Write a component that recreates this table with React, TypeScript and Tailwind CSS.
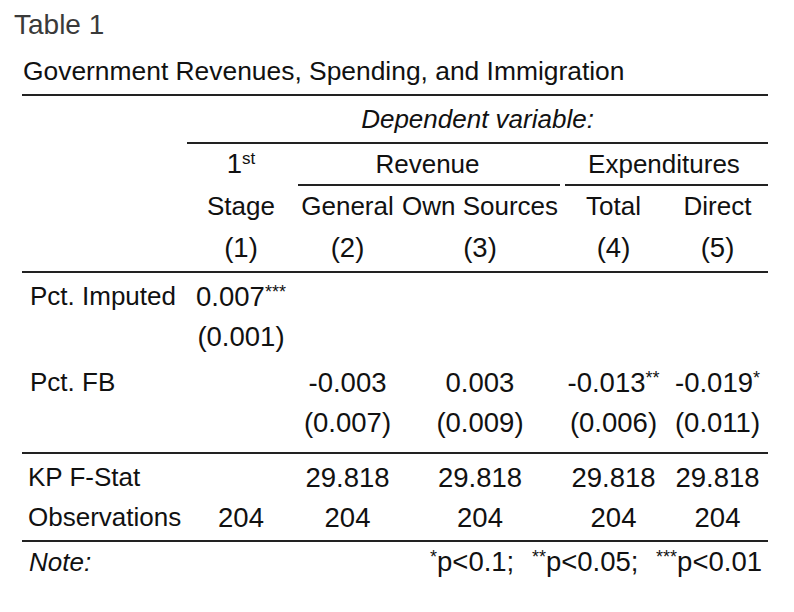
import React from "react";

const cols = "grid grid-cols-[165px_108px_105px_160px_107px_101px]";

function Line({ className = "" }: { className?: string }) {
  return <div className={`h-[2px] bg-[#222] ${className}`} />;
}

function Sup({ children }: { children: React.ReactNode }) {
  return <span className="text-[18px] align-[8px] leading-none">{children}</span>;
}

function N({ children }: { children?: React.ReactNode }) {
  return <div className="text-[27.5px]">{children}</div>;
}

export default function App() {
  return (
    <div
      className="w-[794px] h-[612px] bg-white text-[#111] text-[26px] overflow-hidden"
      style={{ fontFamily: '"Liberation Sans", Arial, sans-serif' }}
    >
      <div className="h-[50px] flex items-center pl-[14px] text-[#3a3a3a] text-[28px]">Table 1</div>
      <div className="ml-[22px] w-[746px]">
        <div className="h-[44px] flex items-center pl-[1px] text-[26.4px]">
          Government Revenues, Spending, and Immigration
        </div>
        <Line />
        <div className={`${cols} h-[46px] items-center`}>
          <div />
          <div className="col-span-5 text-center italic">Dependent variable:</div>
        </div>
        <div className={cols}>
          <div />
          <Line className="col-span-5" />
        </div>
        {/* Row A */}
        <div className={`${cols} h-[42px]`}>
          <div />
          <div className="h-[40px] flex items-center justify-center">
            <span className="text-[27.5px]">
              1<span className="text-[17px] align-[9px] leading-none">st</span>
            </span>
          </div>
          <div className="col-span-2 flex flex-col">
            <div className="h-[40px] flex items-center justify-center">Revenue</div>
            <Line className="ml-[3px]" />
          </div>
          <div className="col-span-2 flex flex-col">
            <div className="h-[40px] flex items-center justify-center">Expenditures</div>
            <Line className="ml-[5px]" />
          </div>
        </div>
        {/* Row B */}
        <div className={`${cols} h-[41px] items-center text-center`}>
          <div />
          <div>Stage</div>
          <div>General</div>
          <div>Own Sources</div>
          <div>Total</div>
          <div>Direct</div>
        </div>
        {/* Row C */}
        <div className={`${cols} h-[40px] items-center text-center`}>
          <div />
          <N>(1)</N>
          <N>(2)</N>
          <N>(3)</N>
          <N>(4)</N>
          <N>(5)</N>
        </div>
        <Line className="mt-[4px]" />
        {/* Pct. Imputed */}
        <div className={`${cols} mt-[3px] h-[40px] items-center text-center`}>
          <div className="text-left pl-[8px]">Pct. Imputed</div>
          <N>
            0.007<Sup>***</Sup>
          </N>
          <div />
          <div />
          <div />
          <div />
        </div>
        <div className={`${cols} h-[39px] items-center text-center`}>
          <div />
          <N>(0.001)</N>
          <div />
          <div />
          <div />
          <div />
        </div>
        {/* Pct. FB */}
        <div className={`${cols} mt-[7px] h-[40px] items-center text-center`}>
          <div className="text-left pl-[8px]">Pct. FB</div>
          <div />
          <N>-0.003</N>
          <N>0.003</N>
          <N>
            -0.013<Sup>**</Sup>
          </N>
          <N>
            -0.019<Sup>*</Sup>
          </N>
        </div>
        <div className={`${cols} h-[39px] items-center text-center`}>
          <div />
          <div />
          <N>(0.007)</N>
          <N>(0.009)</N>
          <N>(0.006)</N>
          <N>(0.011)</N>
        </div>
        <Line className="mt-[11px]" />
        {/* Stats */}
        <div className={`${cols} mt-[3px] h-[40px] items-center text-center`}>
          <div className="text-left pl-[6px]">KP F-Stat</div>
          <div />
          <N>29.818</N>
          <N>29.818</N>
          <N>29.818</N>
          <N>29.818</N>
        </div>
        <div className={`${cols} h-[39px] items-center text-center`}>
          <div className="text-left pl-[6px]">Observations</div>
          <N>204</N>
          <N>204</N>
          <N>204</N>
          <N>204</N>
          <N>204</N>
        </div>
        <Line className="mt-[4px]" />
        <div className="h-[40px] flex items-center justify-between pl-[7px] pr-[6px]">
          <span className="italic">Note:</span>
          <span className="text-[27.5px] [word-spacing:10px]">
            <Sup>*</Sup>p&lt;0.1; <Sup>**</Sup>p&lt;0.05; <Sup>***</Sup>p&lt;0.01
          </span>
        </div>
      </div>
    </div>
  );
}
